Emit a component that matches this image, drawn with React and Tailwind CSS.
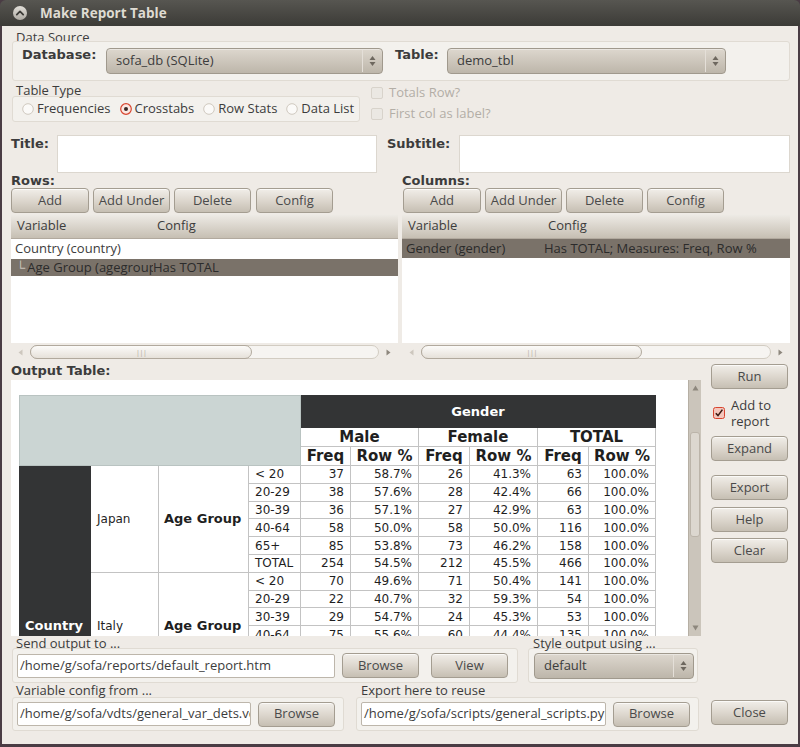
import React from 'react';

const ui = "font-['Open_Sans','Noto_Sans',sans-serif] text-[13px] text-[#3c3c3c]";
const bold = "font-['DejaVu_Sans',sans-serif] font-bold text-[13px] text-[#3c3c3c]";

const groups = [
  {
    name: 'Japan',
    rows: [
      ['< 20', 37, '58.7%', 26, '41.3%', 63],
      ['20-29', 38, '57.6%', 28, '42.4%', 66],
      ['30-39', 36, '57.1%', 27, '42.9%', 63],
      ['40-64', 58, '50.0%', 58, '50.0%', 116],
      ['65+', 85, '53.8%', 73, '46.2%', 158],
      ['TOTAL', 254, '54.5%', 212, '45.5%', 466],
    ],
  },
  {
    name: 'Italy',
    rows: [
      ['< 20', 70, '49.6%', 71, '50.4%', 141],
      ['20-29', 22, '40.7%', 32, '59.3%', 54],
      ['30-39', 29, '54.7%', 24, '45.3%', 53],
      ['40-64', 75, '55.6%', 60, '44.4%', 135],
      ['65+', 61, '52.6%', 55, '47.4%', 116],
      ['TOTAL', 257, '51.4%', 242, '48.6%', 499],
    ],
  },
  {
    name: 'Germany',
    rows: [
      ['< 20', 64, '51.2%', 61, '48.8%', 125],
      ['20-29', 30, '48.4%', 32, '51.6%', 62],
      ['30-39', 27, '50.9%', 26, '49.1%', 53],
      ['40-64', 66, '52.8%', 59, '47.2%', 125],
      ['65+', 70, '50.7%', 68, '49.3%', 138],
      ['TOTAL', 257, '50.9%', 246, '49.1%', 503],
    ],
  },
];

const Btn = ({ w = 'w-[77px]', children, className = '' }) => (
  <div
    className={`${w} h-[25px] shrink-0 flex items-center justify-center rounded-[4px] border border-[#a49d91] bg-gradient-to-b from-[#f1eee9] via-[#ddd7ce] to-[#c6bfb3] shadow-[inset_0_1px_0_rgba(255,255,255,0.7)] ${ui} !text-[#4a4a4a] ${className}`}
  >
    {children}
  </div>
);

const UpDown = () => (
  <svg width="7" height="12" viewBox="0 0 7 12">
    <path d="M3.5 1 L6.5 5 L0.5 5 Z" fill="#6e685f" />
    <path d="M3.5 11 L6.5 7 L0.5 7 Z" fill="#6e685f" />
  </svg>
);

const Combo = ({ w, value }) => (
  <div
    className={`${w} h-[26px] shrink-0 flex items-center rounded-[4px] border border-[#a0998d] bg-gradient-to-b from-[#ddd7ce] to-[#bdb6aa] shadow-[inset_0_1px_0_rgba(255,255,255,0.4)]`}
  >
    <span className={`flex-1 pl-[9px] ${ui}`}>{value}</span>
    <div className="w-[20px] h-[22px] border-l border-[#e4dfd8] flex items-center justify-center">
      <UpDown />
    </div>
  </div>
);

const Radio = ({ on, label }) => (
  <div className="flex items-center gap-[3px]">
    <svg width="12" height="12" viewBox="0 0 12 12">
      {on ? (
        <>
          <circle cx="6" cy="6" r="5.3" fill="#fbe9e4" stroke="#d8452f" strokeWidth="1.2" />
          <circle cx="6" cy="6" r="2" fill="#3a2a26" />
        </>
      ) : (
        <circle cx="6" cy="6" r="5.3" fill="#fbfaf8" stroke="#cfc9bf" strokeWidth="1" />
      )}
    </svg>
    <span className={ui}>{label}</span>
  </div>
);

const HScroll = ({ trough, thumb }) => (
  <div className="h-[18px] flex items-center">
    <div className="w-[19px] flex justify-center">
      <svg width="5" height="7" viewBox="0 0 5 7">
        <path d="M0.5 3.5 L4.5 0.5 L4.5 6.5 Z" fill="#cdc7be" />
      </svg>
    </div>
    <div className={`${trough} h-[14px] rounded-full border border-[#d2ccc2] bg-[#f6f4f1] flex`}>
      <div className={`${thumb} h-full -mt-[1px] -ml-[1px] box-content rounded-full border border-[#b1a99d] bg-gradient-to-b from-[#fcfbf9] to-[#e6e1da] flex items-center justify-center`}>
        <span className="text-[8px] leading-none tracking-[-1px] text-[#b7b0a5]">|||</span>
      </div>
    </div>
    <div className="w-[19px] flex justify-center">
      <svg width="5" height="7" viewBox="0 0 5 7">
        <path d="M4.5 3.5 L0.5 0.5 L0.5 6.5 Z" fill="#8d877d" />
      </svg>
    </div>
  </div>
);

const ListHeader = ({ col }) => (
  <div className={`h-[25px] flex items-center bg-gradient-to-b from-[#efece7] to-[#c6bfb3] border-b border-[#b1a99e] ${ui}`}>
    <span className={`${col} pl-[6px]`}>Variable</span>
    <span className="pl-[6px]">Config</span>
  </div>
);

const Group = ({ className = '', children }) => (
  <div className={`rounded-[3px] border border-[#e0dbd3] bg-[#f3f1ed] ${className}`}>{children}</div>
);

const Field = ({ w, children }) => (
  <div className={`${w} h-[24px] shrink-0 flex items-center bg-white border border-[#bdb6ab] rounded-[2px] pl-[2px] overflow-hidden whitespace-nowrap ${ui}`}>
    {children}
  </div>
);

const td = 'border border-[#c3c3c3] h-[17.8px] p-0 leading-[16px]';

const OutputTable = () => (
  <table className="table-fixed border-collapse w-[636px] font-['DejaVu_Sans',sans-serif] text-[12px] text-[#1f1f1f]">
    <colgroup>
      <col className="w-[71px]" />
      <col className="w-[68px]" />
      <col className="w-[90px]" />
      <col className="w-[52px]" />
      <col className="w-[50px]" />
      <col className="w-[68px]" />
      <col className="w-[51px]" />
      <col className="w-[68px]" />
      <col className="w-[51px]" />
      <col className="w-[67px]" />
    </colgroup>
    <thead>
      <tr className="h-[32px]">
        <td colSpan={4} rowSpan={3} className="bg-[#cbd5d3] border border-[#b9c3c1]" />
        <th colSpan={6} className="bg-[#333435] text-white text-[13px] font-bold border border-[#333435]">Gender</th>
      </tr>
      <tr className="h-[19px]">
        {['Male', 'Female', 'TOTAL'].map((g) => (
          <th key={g} colSpan={2} className="border border-[#c3c3c3] text-[15px] font-bold leading-[17px] p-0">{g}</th>
        ))}
      </tr>
      <tr className="h-[19px]">
        {[0, 1, 2].map((i) => (
          <React.Fragment key={i}>
            <th className="border border-[#c3c3c3] text-[15px] font-bold leading-[17px] p-0">Freq</th>
            <th className="border border-[#c3c3c3] text-[15px] font-bold leading-[17px] p-0">Row %</th>
          </React.Fragment>
        ))}
      </tr>
    </thead>
    <tbody>
      {groups.map((g, gi) =>
        g.rows.map((r, ri) => (
          <tr key={g.name + ri}>
            {gi === 0 && ri === 0 && (
              <td rowSpan={18} className="bg-[#333435] border border-[#333435] text-white font-bold text-[13px] pl-[5px] align-middle">Country</td>
            )}
            {ri === 0 && (
              <>
                <td rowSpan={6} className="border border-[#c3c3c3] pl-[6px] align-middle">{g.name}</td>
                <td rowSpan={6} className="border border-[#c3c3c3] pl-[5px] font-bold text-[13px] align-middle">Age Group</td>
              </>
            )}
            <td className={`${td} pl-[6px]`}>{r[0]}</td>
            <td className={`${td} text-right pr-[6px]`}>{r[1]}</td>
            <td className={`${td} text-right pr-[6px]`}>{r[2]}</td>
            <td className={`${td} text-right pr-[6px]`}>{r[3]}</td>
            <td className={`${td} text-right pr-[6px]`}>{r[4]}</td>
            <td className={`${td} text-right pr-[6px]`}>{r[5]}</td>
            <td className={`${td} text-right pr-[6px]`}>100.0%</td>
          </tr>
        ))
      )}
    </tbody>
  </table>
);

export default function App() {
  return (
    <div className="w-[800px] h-[747px] bg-[#4a3c44] flex flex-col overflow-hidden">
      {/* title bar */}
      <div className="h-[26px] shrink-0 rounded-t-[6px] bg-gradient-to-b from-[#575651] to-[#3c3b37] flex items-center">
        <svg width="16" height="16" viewBox="0 0 16 16" className="ml-[12px]">
          <defs>
            <linearGradient id="tb" x1="0" y1="0" x2="0" y2="1">
              <stop offset="0" stopColor="#e2dfd9" />
              <stop offset="1" stopColor="#aeaaa3" />
            </linearGradient>
          </defs>
          <circle cx="8" cy="8" r="7" fill="url(#tb)" />
          <path d="M4.8 9.6 L8 6.4 L11.2 9.6" fill="none" stroke="#3c3b37" strokeWidth="1.8" strokeLinecap="round" strokeLinejoin="round" />
        </svg>
        <span className="ml-[12px] font-['Open_Sans',sans-serif] font-bold text-[13.5px] text-[#dfdbd2]">Make Report Table</span>
      </div>

      {/* body */}
      <div className={`flex-1 mx-[2px] mb-[3px] bg-[#efebe6] pl-[9px] flex flex-col ${ui}`}>
        {/* data source */}
        <div className="mt-[4px] ml-[5px] h-[14px] leading-[14px]">Data Source</div>
        <Group className="ml-[1px] -mt-[3px] w-[778px] h-[40px] flex items-center pl-[9px]">
          <span className={`${bold} w-[84px] self-start mt-[5px] leading-[16px]`}>Database:</span>
          <Combo w="w-[277px]" value="sofa_db (SQLite)" />
          <span className={`${bold} ml-[12px] w-[52px] self-start mt-[5px] leading-[16px]`}>Table:</span>
          <Combo w="w-[279px]" value="demo_tbl" />
        </Group>

        {/* table type */}
        <div className="flex mt-[2px]">
          <div>
            <div className="ml-[5px] h-[14px] leading-[14px]">Table Type</div>
            <Group className="ml-[1px] -mt-[1px] w-[348px] h-[26px] flex items-center pl-[9px] gap-[9px]">
              <Radio label="Frequencies" />
              <Radio on label="Crosstabs" />
              <Radio label="Row Stats" />
              <Radio label="Data List" />
            </Group>
          </div>
          <div className="ml-[11px] -mt-[1px] flex flex-col">
            {['Totals Row?', 'First col as label?'].map((t) => (
              <div key={t} className="h-[21px] flex items-center gap-[6px]">
                <div className="w-[12px] h-[12px] rounded-[2px] border border-[#d8d3cb] bg-[#ebe8e3]" />
                <span className="text-[#b3aea6]">{t}</span>
              </div>
            ))}
          </div>
        </div>

        {/* title / subtitle */}
        <div className="flex mt-[11px] h-[38px]">
          <span className={`${bold} w-[46px] mt-[1px] leading-[16px]`}>Title:</span>
          <div className="w-[320px] h-[38px] bg-white border border-[#dcd7cf]" />
          <span className={`${bold} ml-[10px] w-[72px] mt-[1px] leading-[16px]`}>Subtitle:</span>
          <div className="w-[331px] h-[38px] bg-white border border-[#dcd7cf]" />
        </div>

        {/* rows / columns */}
        <div className="flex gap-[4px]">
          <div className="w-[387px]">
            <div className={`${bold} h-[15px] leading-[16px]`}>Rows:</div>
            <div className="flex gap-[4px]">
              <Btn w="w-[78px]">Add</Btn>
              <Btn>Add Under</Btn>
              <Btn>Delete</Btn>
              <Btn className="ml-[1px]">Config</Btn>
            </div>
            <div className="mt-[1px]">
              <ListHeader col="w-[140px]" />
              <div className="h-[104px] bg-white">
                <div className="h-[20px] flex items-center pl-[4px]">Country (country)</div>
                <div className="h-[17px] flex items-center bg-[#7a7269] text-[#2b2b2b] whitespace-nowrap overflow-hidden">
                  <span className="w-[142px] pl-[5px] overflow-hidden">
                    <span className="text-[#c9c3ba] mr-[2px]">└</span>Age Group (agegroup)
                  </span>
                  <span>Has TOTAL</span>
                </div>
              </div>
              <HScroll trough="w-[350px]" thumb="w-[220px]" />
            </div>
          </div>
          <div className="w-[388px]">
            <div className={`${bold} h-[15px] leading-[16px]`}>Columns:</div>
            <div className="flex gap-[4px] ml-[1px]">
              <Btn w="w-[78px]">Add</Btn>
              <Btn>Add Under</Btn>
              <Btn>Delete</Btn>
              <Btn>Config</Btn>
            </div>
            <div className="mt-[1px]">
              <ListHeader col="w-[140px]" />
              <div className="h-[104px] bg-white">
                <div className="h-[19px] flex items-center bg-[#7a7269] text-[#2b2b2b] whitespace-nowrap">
                  <span className="w-[142px] pl-[4px]">Gender (gender)</span>
                  <span>Has TOTAL; Measures: Freq, Row %</span>
                </div>
              </div>
              <HScroll trough="w-[351px]" thumb="w-[219px]" />
            </div>
          </div>
        </div>

        {/* output */}
        <div className="flex">
          <div className="w-[690px]">
            <div className={`${bold} h-[19px] pt-[2px] leading-[16px]`}>Output Table:</div>
            <div className="h-[256px] flex">
              <div className="w-[677px] bg-white overflow-hidden pl-[8px] pt-[15px]">
                <OutputTable />
              </div>
              <div className="w-[13px] bg-[#cbc5bb] border-l border-[#b6afa4] flex flex-col items-center">
                <svg width="7" height="6" viewBox="0 0 7 6" className="mt-[5px]">
                  <path d="M3.5 0.5 L6.5 5.5 L0.5 5.5 Z" fill="#8d877d" />
                </svg>
                <div className="mt-[41px] w-[10px] h-[105px] rounded-[3px] border border-[#bbb4a9] bg-[#dcd7cf]" />
                <div className="flex-1" />
                <svg width="7" height="6" viewBox="0 0 7 6" className="mb-[5px]">
                  <path d="M3.5 5.5 L6.5 0.5 L0.5 0.5 Z" fill="#8d877d" />
                </svg>
              </div>
            </div>
          </div>
          <div className="ml-[10px] w-[77px] flex flex-col">
            <Btn className="mt-[3px]">Run</Btn>
            <div className="mt-[8px] h-[32px] flex items-center gap-[6px] pl-[2px]">
              <svg width="12" height="12" viewBox="0 0 12 12">
                <rect x="0.5" y="0.5" width="11" height="11" rx="2" fill="#f4c6bc" stroke="#d8452f" />
                <path d="M2.8 6.2 L5 8.6 L9.4 2.6" fill="none" stroke="#3a1a12" strokeWidth="1.6" />
              </svg>
              <span className="leading-[16px]">
                Add to
                <br />
                report
              </span>
            </div>
            <Btn className="mt-[7px]">Expand</Btn>
            <Btn className="mt-[14px]">Export</Btn>
            <Btn className="mt-[7px]">Help</Btn>
            <Btn className="mt-[6px]">Clear</Btn>
          </div>
        </div>

        {/* send output / style */}
        <div className="flex">
          <div className="ml-[1px]">
            <div className="ml-[4px] h-[12px] leading-[14px] whitespace-nowrap">Send output to ...</div>
            <Group className="w-[506px] h-[35px] flex items-center pl-[4px]">
              <Field w="w-[318px]">/home/g/sofa/reports/default_report.htm</Field>
              <Btn className="ml-[7px]">Browse</Btn>
              <Btn className="ml-[12px]">View</Btn>
            </Group>
          </div>
          <div className="ml-[10px]">
            <div className="ml-[5px] h-[12px] leading-[14px] whitespace-nowrap">Style output using ...</div>
            <Group className="w-[170px] h-[35px] flex items-center pl-[5px]">
              <Combo w="w-[160px]" value="default" />
            </Group>
          </div>
        </div>

        {/* var config / export */}
        <div className="flex">
          <div className="ml-[1px]">
            <div className="ml-[4px] h-[14px] leading-[15px] whitespace-nowrap">Variable config from ...</div>
            <Group className="w-[332px] h-[34px] flex items-center pl-[4px]">
              <Field w="w-[234px]">/home/g/sofa/vdts/general_var_dets.vdts</Field>
              <Btn className="ml-[7px]">Browse</Btn>
            </Group>
          </div>
          <div className="ml-[12px]">
            <div className="ml-[5px] h-[14px] leading-[15px] whitespace-nowrap">Export here to reuse</div>
            <Group className="w-[343px] h-[34px] flex items-center pl-[4px]">
              <Field w="w-[245px]">/home/g/sofa/scripts/general_scripts.py</Field>
              <Btn className="ml-[7px]">Browse</Btn>
            </Group>
          </div>
          <Btn className="ml-[12px] mt-[17px]">Close</Btn>
        </div>
      </div>
    </div>
  );
}
